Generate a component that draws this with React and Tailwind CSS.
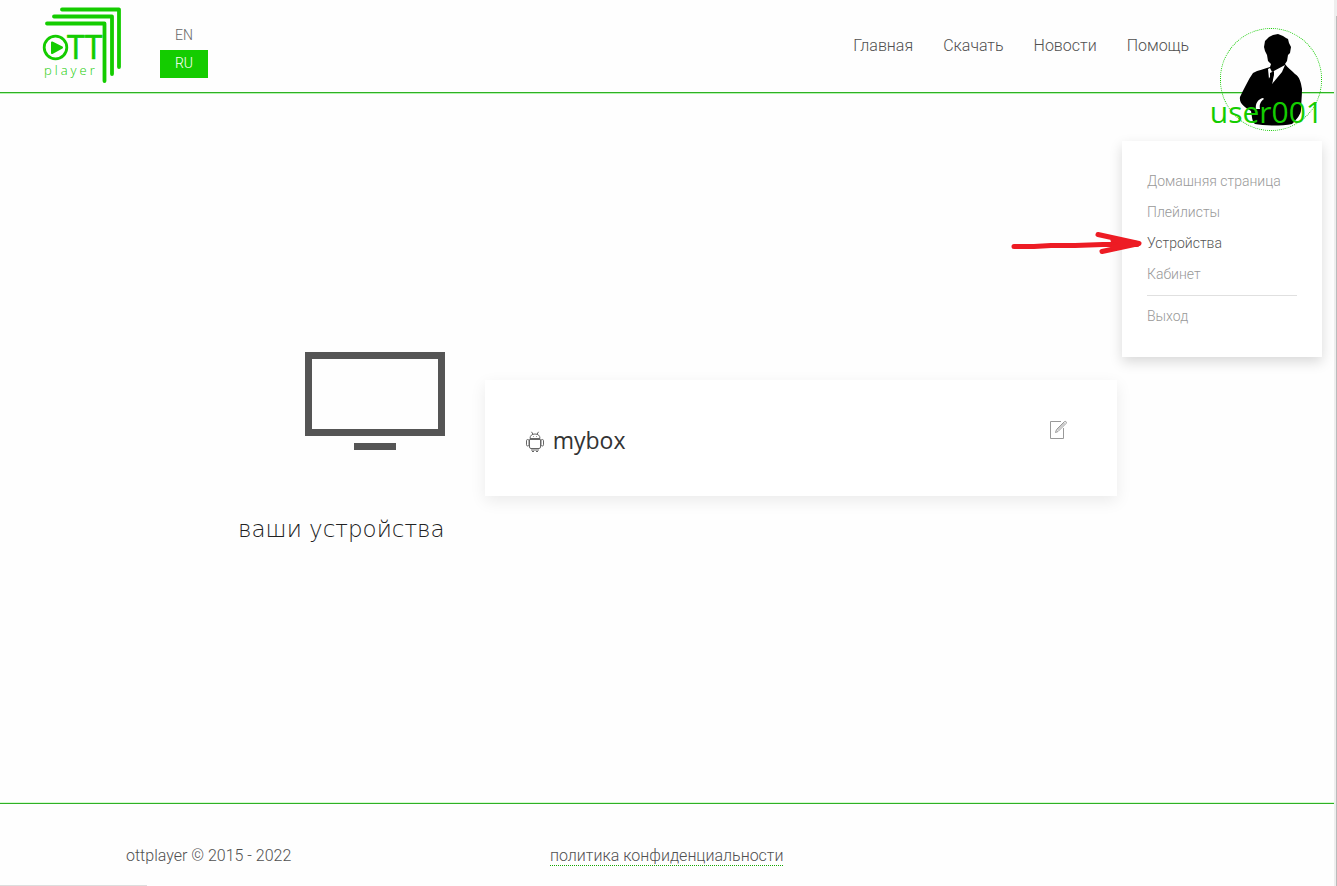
import React from "react";

const navItems = ["Главная", "Скачать", "Новости", "Помощь"];
const menuItems = ["Домашняя страница", "Плейлисты", "Устройства", "Кабинет"];

function Logo() {
  return (
    <svg viewBox="0 0 84 80" className="h-20 w-[84px]" role="img" aria-label="OTT player">
      <g fill="none" stroke="#14cc00" strokeWidth="3.8" strokeLinecap="round" strokeLinejoin="round">
        <path d="M22 4.500H79V62" />
        <path d="M14 11.500H72V69" />
        <path d="M7 18.500H64.500V76" />
        <circle cx="15.500" cy="42.500" r="11.300" strokeWidth="2.800" />
      </g>
      <path d="M12 37.500L22 42.500L12 48Z" fill="#14cc00" stroke="#14cc00" strokeWidth="2" strokeLinejoin="round" />
      <text x="27" y="54" fill="#14cc00" stroke="#14cc00" strokeWidth="0.600" strokeLinejoin="round" className="font-['Open_Sans'] text-[32px] font-normal">TT</text>
      <text x="4" y="70" fill="#14cc00" className="font-['Open_Sans'] text-[13px] font-light tracking-[3px]">player</text>
    </svg>
  );
}

function Businessman() {
  return (
    <svg viewBox="0 0 64 92" className="h-[92px] w-16" aria-hidden="true">
      <path
        d="M30 3L34 1L39 0L44 2L47 4L49 5L50 9L52 13L51 19L49 21L48 27L46 30C49 34 52 36 56 40C61 43 62 49 63 55C63 62 62 70 62 76C62 80 58 85 53 90C43 92 25 92 16 90C13 88 13 82 12 77C5 73 0 69 1 63C5 55 9 46 14 39C19 36 26 35 31 33L32 30L29 27L28 21L26 17L25 13L26 7Z"
        fill="#000"
      />
      <path d="M29 35L31 34L33 38L46 31L43 38L33 50L34 43L32 41L30 45Z" fill="#fff" />
      <path d="M31 39L35 37L35 41L33 50L29 47L31 43Z" fill="#000" />
      <path d="M24 64C19 65 16 70 17 75L21 75C20 70 22 67 25 65Z" fill="#fff" />
    </svg>
  );
}

function AndroidIcon() {
  return (
    <svg viewBox="0 0 20 22" className="mt-1 h-[22px] w-5" fill="none" stroke="#666" strokeWidth="1" aria-hidden="true">
      <path d="M5 7.500C5 4.500 7 3 10 3S15 4.500 15 7.500ZM6.500 .8L8 3.300M13.500 .8L12 3.300" />
      <path d="M4.500 8.500H15.500V16Q15.500 17.500 14 17.500H6Q4.500 17.500 4.500 16Z" />
      <rect x="1.500" y="8.500" width="2.500" height="6.500" rx="1.200" />
      <rect x="16" y="8.500" width="2.500" height="6.500" rx="1.200" />
      <path d="M7 17.500V20Q8 22 9 20V17.500M11 17.500V20Q12 22 13 20V17.500" />
      <path d="M8 5.500H8.600M11.400 5.500H12" />
    </svg>
  );
}

export default function App() {
  return (
    <div className="relative flex min-h-screen bg-[#fefefe] font-[Roboto,sans-serif] font-light text-[#505050]">
      <div className="relative flex min-w-0 flex-1 flex-col">
        <header className="flex h-[93px] justify-between border-b border-[#2fb024] pl-10 shadow-[0_1px_0_#b5f5b0]">
          <div className="flex gap-9">
            <a href="#home" className="pt-[5px]"><Logo /></a>
            <div className="flex flex-col pt-[21px] text-center text-sm">
              <button type="button" className="h-7 w-12 text-[#666]">EN</button>
              <button type="button" className="mt-px h-7 w-12 bg-[#14cc00] pb-0.5 text-white">RU</button>
            </div>
          </div>
          <nav className="mr-[145px] flex h-[92px] items-center gap-[30px]">
            {navItems.map((item) => (
              <a key={item} href="#nav">{item}</a>
            ))}
          </nav>
        </header>

        <div className="absolute top-7 right-3 flex h-[103px] w-[102px] items-start justify-center rounded-full border border-dotted border-[#14cc00] pt-[5px]">
          <Businessman />
          <a href="#user" className="absolute -right-0.5 bottom-0 font-['Open_Sans',sans-serif] text-[30px] leading-9 font-normal text-[#14cc00]">
            user001
          </a>
        </div>

        <nav className="absolute top-[141px] right-3 w-[200px] bg-white p-[25px] text-sm text-[#999] shadow-[0_5px_12px_rgba(0,0,0,0.15)]">
          {menuItems.map((item) => (
            <a
              key={item}
              href="#menu"
              className={item === "Устройства" ? "block leading-[31px] text-[#555]" : "block leading-[31px]"}
            >
              {item}
            </a>
          ))}
          <hr className="my-[5px] border-[#e0e0e0]" />
          <a href="#logout" className="block leading-[31px]">Выход</a>
        </nav>

        <svg viewBox="0 0 134 26" className="absolute top-[231px] right-[191px] h-[26px] w-[134px]" aria-hidden="true">
          <g fill="none" stroke="#ed1c24" strokeWidth="5" strokeLinecap="round" strokeLinejoin="round">
            <path d="M5 15.500H25L42 14.500H66L94 13.500H128" />
            <path d="M89 3.500L130 12.500L93 20.500" />
            <path d="M104 9L128 12.500L104 16" />
          </g>
        </svg>

        <main className="flex flex-1 items-center">
          <section className="flex w-1/3 flex-col items-end gap-16">
            <svg viewBox="0 0 140 98" className="h-[98px] w-[140px]" fill="#555" aria-hidden="true">
              <path d="M0 0H140V84H0ZM7 7V77H133V7Z" fillRule="evenodd" />
              <rect x="49" y="91" width="42" height="7" />
            </svg>
            <h1 className="text-right font-['DejaVu_Sans',sans-serif] text-[23px] leading-[30px] font-extralight whitespace-nowrap text-[#222]">
              ваши устройства
            </h1>
          </section>
          <section className="mr-[217px] mb-5 ml-10 flex h-[116px] flex-1 justify-between bg-white px-10 pt-10 shadow-[0_5px_15px_rgba(0,0,0,0.08)]">
            <h2 className="flex h-10 items-center gap-2 font-['Open_Sans',sans-serif] text-[23px] font-normal text-[#333]">
              <AndroidIcon />
              mybox
            </h2>
            <button type="button" aria-label="Редактировать" className="mr-2 h-5 w-5">
              <svg viewBox="0 0 20 20" className="h-5 w-5" fill="none" stroke="#999" strokeWidth="1" aria-hidden="true">
                <path d="M12 1.500H1.500V18.500H14.500V8" />
                <path d="M6.500 12.500L7.500 9.500L15.500 1.500Q17 .8 17.500 2.500Q17.500 3.200 17 3.500L9 11.500ZM8 10.500L16 2.500" />
              </svg>
            </button>
          </section>
        </main>

        <footer className="flex h-[83px] border-t border-[#2fb024] pt-10 shadow-[0_-1px_0_#d5fad2]">
          <p className="w-[550px] pl-[126px]">ottplayer © 2015 - 2022</p>
          <a href="#privacy" className="h-[22px] border-b border-dotted border-[#14a800]">политика конфиденциальности</a>
        </footer>
      </div>
      <div className="flex w-[3px] bg-[#eee] pt-4" aria-hidden="true">
        <div className="ml-auto w-px bg-[#bbb]" />
      </div>
      <div className="absolute bottom-0 left-0 h-px w-[147px] bg-[#ddd]" aria-hidden="true" />
    </div>
  );
}
